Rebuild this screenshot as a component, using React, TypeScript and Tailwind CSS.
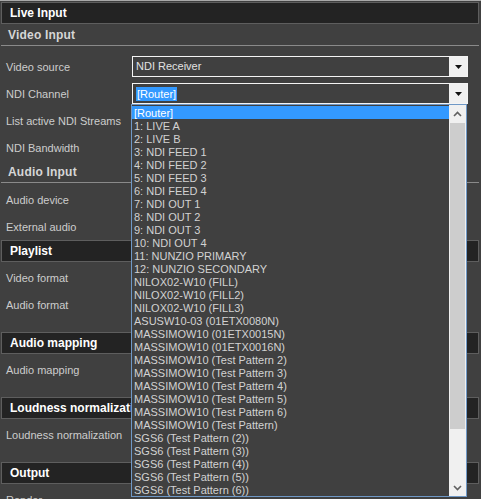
import React from 'react';

const channels = [
  '[Router]',
  '1: LIVE A',
  '2: LIVE B',
  '3: NDI FEED 1',
  '4: NDI FEED 2',
  '5: NDI FEED 3',
  '6: NDI FEED 4',
  '7: NDI OUT 1',
  '8: NDI OUT 2',
  '9: NDI OUT 3',
  '10: NDI OUT 4',
  '11: NUNZIO PRIMARY',
  '12: NUNZIO SECONDARY',
  'NILOX02-W10 (FILL)',
  'NILOX02-W10 (FILL2)',
  'NILOX02-W10 (FILL3)',
  'ASUSW10-03 (01ETX0080N)',
  'MASSIMOW10 (01ETX0015N)',
  'MASSIMOW10 (01ETX0016N)',
  'MASSIMOW10 (Test Pattern 2)',
  'MASSIMOW10 (Test Pattern 3)',
  'MASSIMOW10 (Test Pattern 4)',
  'MASSIMOW10 (Test Pattern 5)',
  'MASSIMOW10 (Test Pattern 6)',
  'MASSIMOW10 (Test Pattern)',
  'SGS6 (Test Pattern (2))',
  'SGS6 (Test Pattern (3))',
  'SGS6 (Test Pattern (4))',
  'SGS6 (Test Pattern (5))',
  'SGS6 (Test Pattern (6))',
];

function SectionBar({ title }: { title: string }) {
  return (
    <div className="h-[22px] flex items-center pl-[8px] bg-[#232323] border border-[#5e5e5e] text-[12px] font-bold text-white">
      {title}
    </div>
  );
}

function SubHeader({ title }: { title: string }) {
  return (
    <div className="h-[22px] flex items-center pl-[7px] border-b border-[#8a8a8a] text-[12px] font-bold text-[#d6d6d6] tracking-[0.2px]">
      {title}
    </div>
  );
}

function Row({ label, children }: { label: string; children?: React.ReactNode }) {
  return (
    <div className="h-[27px] flex items-center">
      <div className="w-[130px] pl-[5px] pt-[1px] text-[#cdcdcd] whitespace-nowrap overflow-hidden">{label}</div>
      {children}
    </div>
  );
}

function ComboArrow() {
  return (
    <div className="w-[18px] h-full bg-[#f0f0f0] flex items-center justify-center">
      <svg width="7" height="4" viewBox="0 0 7 4">
        <polygon points="0,0 7,0 3.5,4" fill="#111" />
      </svg>
    </div>
  );
}

function Combo({ children }: { children: React.ReactNode }) {
  return (
    <div className="ml-[1px] w-[336px] h-[21px] border border-[#f4f4f4] flex items-stretch">
      <div className="flex-1 flex items-center pl-[3px] text-[#e2e2e2]">{children}</div>
      <ComboArrow />
    </div>
  );
}

function Chevron({ up }: { up?: boolean }) {
  return (
    <svg width="9" height="6" viewBox="0 0 9 6">
      <polyline
        points={up ? '1,5 4.5,1.5 8,5' : '1,1 4.5,4.5 8,1'}
        fill="none"
        stroke="#606060"
        strokeWidth="1.6"
      />
    </svg>
  );
}

export default function App() {
  return (
    <div className="relative w-[481px] h-[499px] overflow-hidden bg-[#404040] border-t border-[#a9a9a9] font-['Liberation_Sans',Arial,sans-serif] text-[11px]">
      <div className="pl-[1px] pr-[2px] pt-[1px]">
        {/* Live Input */}
        <SectionBar title="Live Input" />
        <SubHeader title="Video Input" />
        <div className="pt-[7px]">
          <Row label="Video source">
            <Combo>NDI Receiver</Combo>
          </Row>
          <Row label="NDI Channel">
            <Combo>
              <span className="bg-[#3399ff] text-white px-[1px] leading-[14px]">[Router]</span>
            </Combo>
          </Row>
          <Row label="List active NDI Streams" />
          <Row label="NDI Bandwidth" />
        </div>
        <SubHeader title="Audio Input" />
        <div className="pt-[3px]">
          <Row label="Audio device" />
          <Row label="External audio" />
        </div>

        {/* Playlist */}
        <SectionBar title="Playlist" />
        <div className="pt-[2px] pb-[14px]">
          <Row label="Video format" />
          <Row label="Audio format" />
        </div>

        <SectionBar title="Audio mapping" />
        <div className="pt-[2px] pb-[14px]">
          <Row label="Audio mapping" />
        </div>

        <SectionBar title="Loudness normalization" />
        <div className="pt-[2px] pb-[14px]">
          <Row label="Loudness normalization" />
        </div>

        <SectionBar title="Output" />
        <div className="pt-[2px]">
          <Row label="Render" />
        </div>
      </div>

      {/* Open NDI channel list */}
      <div className="absolute left-[131px] top-[103px] w-[336px] h-[393px] border border-[#6f98c6] bg-[#404040] flex">
        <div className="flex-1 flex flex-col pt-[1px]">
          {channels.map((c, i) => (
            <div
              key={c}
              className={`h-[13px] leading-[14px] pl-[2px] whitespace-nowrap ${
                i === 0 ? 'bg-[#3399ff] text-white' : 'text-[#d2d2d2]'
              }`}
            >
              {c}
            </div>
          ))}
        </div>
        <div className="w-[17px] bg-[#f0f0f0] flex flex-col">
          <div className="h-[18px] flex items-center justify-center">
            <Chevron up />
          </div>
          <div className="mx-[1px] h-[306px] bg-[#cdcdcd]" />
          <div className="flex-1" />
          <div className="h-[17px] flex items-center justify-center">
            <Chevron />
          </div>
        </div>
      </div>
    </div>
  );
}
